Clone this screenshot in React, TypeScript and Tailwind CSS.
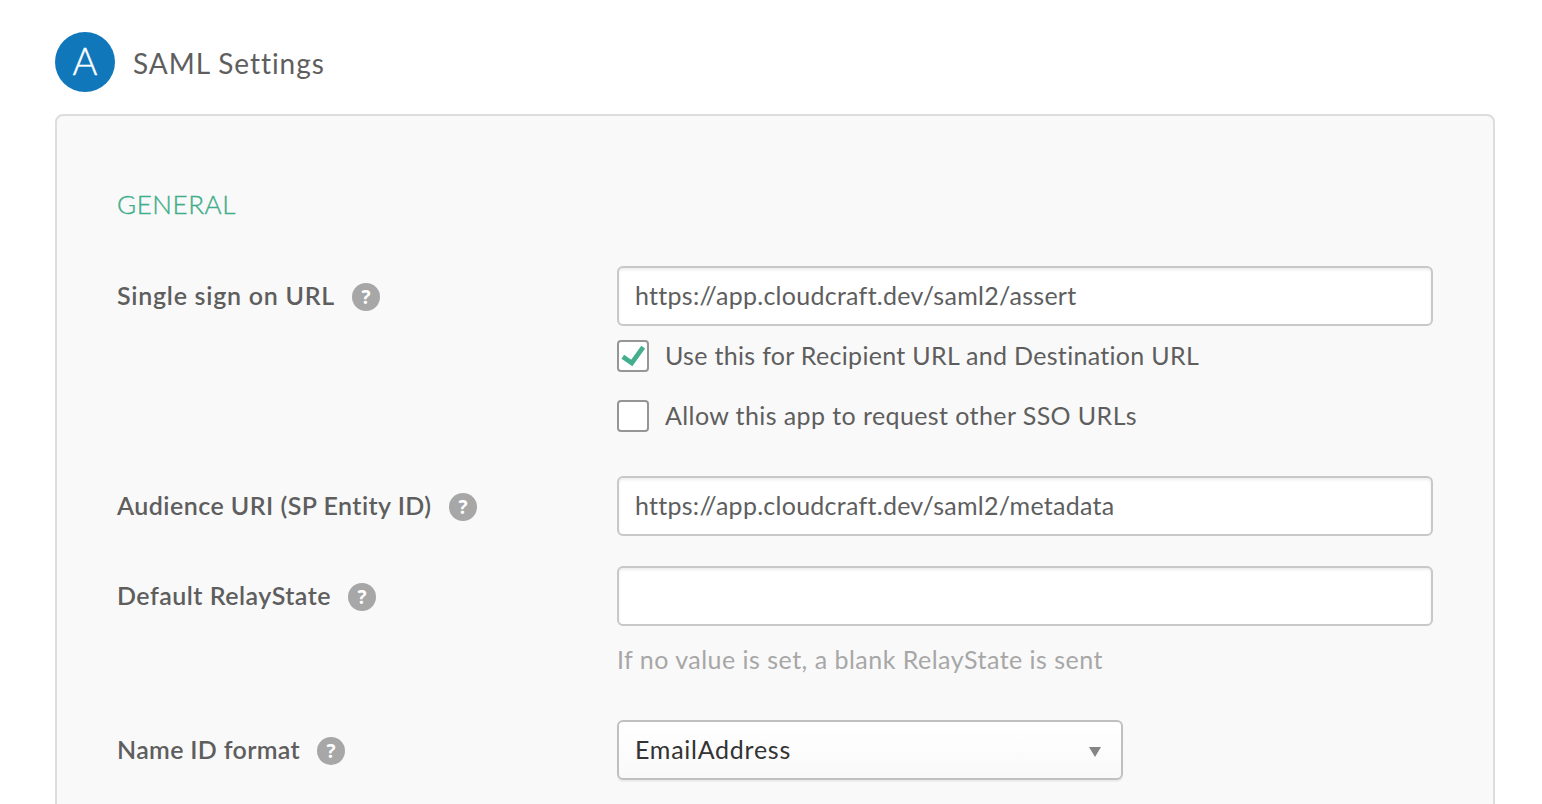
import React from "react";

function Help() {
  return (
    <svg width="28" height="28" viewBox="0 0 28 28" className="mt-[3px] shrink-0">
      <circle cx="14" cy="14" r="14" fill="#a7a7a7" />
      <text x="14" y="21" textAnchor="middle" fontSize="19" fontWeight="700" fill="#fff" fontFamily="Open Sans, sans-serif">?</text>
    </svg>
  );
}

function Text({ children, width, className = "" }: { children: string; width: number; className?: string }) {
  const ref = React.useRef<HTMLSpanElement>(null);
  React.useLayoutEffect(() => {
    const el = ref.current;
    if (!el) return;
    const fit = () => {
      el.style.letterSpacing = "0px";
      const gap = (width - el.getBoundingClientRect().width) / children.length;
      el.style.letterSpacing = `${gap}px`;
    };
    fit();
    document.fonts?.ready.then(fit);
  }, [children, width]);
  return <span ref={ref} className={`inline-block whitespace-nowrap ${className}`}>{children}</span>;
}

function Label({ text, width }: { text: string; width: number }) {
  return (
    <div className="flex h-[60px] w-[500px] shrink-0 items-center gap-[17px] pb-0.5 font-semibold text-[#5e5e5e]">
      <Text width={width}>{text}</Text>
      <Help />
    </div>
  );
}

function Field({ value, width }: { value?: string; width?: number }) {
  return (
    <div className="flex h-[60px] w-[816px] items-center rounded-[6px] border-2 border-[#c8c8c8] bg-white px-4 pb-0.5 shadow-[inset_0_2px_3px_rgba(0,0,0,0.07)]">
      {value && <Text width={width!}>{value}</Text>}
    </div>
  );
}

function Check({ checked, text, width }: { checked?: boolean; text: string; width: number }) {
  return (
    <div className="flex h-8 items-center gap-4">
      <span className="flex size-8 items-center justify-center rounded-[4px] border-2 border-[#969696] bg-white">
        {checked && (
          <svg width="28" height="28" viewBox="0 0 28 28" fill="none" className="shrink-0">
            <path d="M3.8 14.8 12.8 21 24.2 5.2" stroke="#44af8e" strokeWidth="4.7" />
          </svg>
        )}
      </span>
      <Text width={width} className="pb-0.5">{text}</Text>
    </div>
  );
}

export default function App() {
  return (
    <main className="flex h-[804px] w-[1542px] flex-col overflow-hidden bg-white px-[55px] pt-8 font-['Lato',sans-serif] text-[25px] leading-[30px] text-[#5e5e5e]">
      <header className="flex h-[60px] items-center gap-[18px]">
        <div className="flex size-[60px] items-center justify-center rounded-full bg-[#1177bb] pb-1 text-[38px] font-light text-white [-webkit-text-stroke:0.4px_white]">A</div>
        <h1 className="pt-0.5 text-[28px]"><Text width={191}>SAML Settings</Text></h1>
      </header>
      <section className="mt-[22px] h-[720px] w-[1440px] shrink-0 rounded-[8px] border-2 border-[#dddddd] bg-[#f9f9f9] px-[60px] pt-[73px]">
        <h2 className="h-[30px] text-[26px] font-light text-[#3fae8c] [-webkit-text-stroke:0.4px_#3fae8c]"><Text width={119}>GENERAL</Text></h2>
        <div className="mt-[47px] flex">
          <Label text="Single sign on URL" width={218} />
          <div>
            <Field value="https://app.cloudcraft.dev/saml2/assert" width={440} />
            <div className="mt-[14px] flex flex-col gap-7">
              <Check checked text="Use this for Recipient URL and Destination URL" width={535} />
              <Check text="Allow this app to request other SSO URLs" width={472} />
            </div>
          </div>
        </div>
        <div className="mt-11 flex">
          <Label text="Audience URI (SP Entity ID)" width={315} />
          <Field value="https://app.cloudcraft.dev/saml2/metadata" width={478} />
        </div>
        <div className="mt-[30px] flex">
          <Label text="Default RelayState" width={214} />
          <div>
            <Field />
            <p className="mt-[18px] mb-[1px] h-[30px] text-[#a7a7a7]"><Text width={486}>If no value is set, a blank RelayState is sent</Text></p>
          </div>
        </div>
        <div className="mt-[45px] flex">
          <Label text="Name ID format" width={183} />
          <div className="flex h-[60px] w-[506px] items-center justify-between rounded-[6px] border-2 border-[#c0c0c0] bg-linear-to-b from-white to-[#f9f9f9] pr-5 pl-4 text-[#333] shadow-[0_2px_1px_rgba(0,0,0,0.05)]">
            <Text width={156} className="pb-0.5">EmailAddress</Text>
            <svg width="12" height="10" viewBox="0 0 12 10" className="mt-1"><path d="M0 0H12L6 10Z" fill="#858585" /></svg>
          </div>
        </div>
      </section>
    </main>
  );
}
